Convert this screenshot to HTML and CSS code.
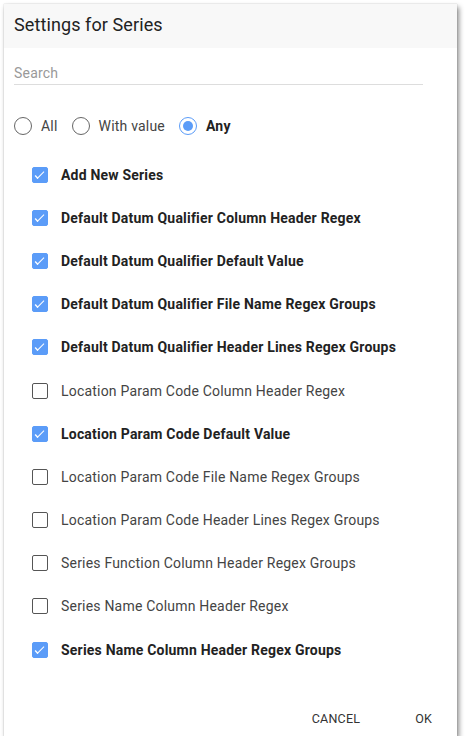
FILE: index.html
```html
<!DOCTYPE html>
<html>
<head>
<meta charset="utf-8">
<link rel="stylesheet" href="styles.css">
</head>
<body>
<div class="dialog">
  <div class="header">Settings for Series</div>
  <div class="search"><span class="placeholder">Search</span></div>
  <div class="radios">
    <label class="radio"><span class="circle"></span><span>All</span></label>
    <label class="radio"><span class="circle"></span><span>With value</span></label>
    <label class="radio on"><span class="circle"></span><span>Any</span></label>
  </div>
  <div class="list">
    <div class="row on"><span class="box"></span><span>Add New Series</span></div>
    <div class="row on"><span class="box"></span><span>Default Datum Qualifier Column Header Regex</span></div>
    <div class="row on"><span class="box"></span><span>Default Datum Qualifier Default Value</span></div>
    <div class="row on"><span class="box"></span><span>Default Datum Qualifier File Name Regex Groups</span></div>
    <div class="row on"><span class="box"></span><span>Default Datum Qualifier Header Lines Regex Groups</span></div>
    <div class="row"><span class="box"></span><span>Location Param Code Column Header Regex</span></div>
    <div class="row on"><span class="box"></span><span>Location Param Code Default Value</span></div>
    <div class="row"><span class="box"></span><span>Location Param Code File Name Regex Groups</span></div>
    <div class="row"><span class="box"></span><span>Location Param Code Header Lines Regex Groups</span></div>
    <div class="row"><span class="box"></span><span>Series Function Column Header Regex Groups</span></div>
    <div class="row"><span class="box"></span><span>Series Name Column Header Regex</span></div>
    <div class="row on"><span class="box"></span><span>Series Name Column Header Regex Groups</span></div>
  </div>
  <div class="actions">
    <span class="btn cancel">CANCEL</span>
    <span class="btn ok">OK</span>
  </div>
</div>
</body>
</html>
```
FILE: styles.css
```css
html, body { margin: 0; padding: 0; background: #fff; }
body { padding: 4px 0 0 4px; font-family: Roboto, "Noto Sans", sans-serif; color: #333; }
.dialog {
  width: 453px; height: 732px; background: #fff; box-sizing: border-box;
  box-shadow: 0 0 1px rgba(0,0,0,0.25), 2px 3px 5px rgba(0,0,0,0.45);
  display: flex; flex-direction: column; position: relative;
}
.header {
  height: 44px; background: #f8f8f8; padding-left: 10px; box-sizing: border-box;
  font-size: 18px; line-height: 41px; color: #222; letter-spacing: 0.1px;
}
.search {
  margin: 16px 0 0 10px; width: 409px; height: 20px; border-bottom: 1px solid #ddd;
  font-size: 14px; line-height: 18px; letter-spacing: 0.2px;
}
.placeholder { color: #999; }
.radios { display: flex; align-items: center; margin: 31px 0 0 10px; height: 20px; font-size: 14px; color: #444; letter-spacing: 0.2px; }
.radio { display: flex; align-items: center; margin-right: 14px; }
.circle {
  width: 16px; height: 16px; border: 1px solid #666; border-radius: 50%;
  margin-right: 9px; position: relative; box-sizing: content-box;
}
.radio.on .circle { border-color: #5b9cf8; }
.radio.on .circle::after {
  content: ""; position: absolute; left: 3px; top: 3px; width: 10px; height: 10px;
  border-radius: 50%; background: #5b9cf8;
}
.radio.on span:last-child { font-weight: bold; color: #222; }
.list { margin-top: 17px; padding-left: 28px; }
.row { display: flex; align-items: center; height: 43.2px; font-size: 14px; color: #444; letter-spacing: 0.2px; }
.box {
  width: 14px; height: 14px; border: 1px solid #555; border-radius: 2px; margin-right: 13px;
  position: relative; flex: none;
}
.row.on .box { background: #5b9cf8; border-color: #5b9cf8; }
.row.on .box::after {
  content: ""; position: absolute; left: 4px; top: 2px; width: 6px; height: 3px;
  border-left: 1px solid #fff; border-bottom: 1px solid #fff; transform: translate(-1px, 2px) rotate(-45deg) scaleX(1.4);
}
.row.on span:last-child { font-weight: bold; color: #222; }
.actions { margin-top: auto; display: flex; justify-content: flex-end; height: 36px; align-items: center; padding-right: 25px; font-size: 12.5px; color: #333; }
.btn { letter-spacing: 0.2px; }
.cancel { margin-right: 55px; }
```
